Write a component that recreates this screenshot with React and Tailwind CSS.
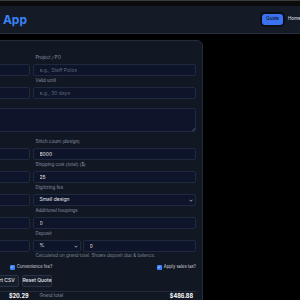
import React from "react";

const labelCls = "block pl-[3px] text-[4.5px] leading-[6px] text-[#8b95a7]";
const boxCls =
  "h-[12px] w-full rounded-[2px] border border-[#1f2a40] bg-[#0e152a] pl-[6px] py-0 text-[5px] text-[#e5e7eb] placeholder:text-[#5c677c] outline-none";

function Field({ label, children, tight }) {
  return (
    <div className={tight ? "flex flex-col gap-[1px]" : "flex flex-col gap-[3px]"}>
      <span className={labelCls}>{label}</span>
      {children}
    </div>
  );
}

function TextInput({ value, placeholder }) {
  return <input readOnly className={boxCls} defaultValue={value} placeholder={placeholder} />;
}

function Chevron() {
  return (
    <svg width="4" height="3" viewBox="0 0 8 5" className="shrink-0">
      <path d="M1 1l3 3 3-3" fill="none" stroke="#cbd5e1" strokeWidth="1.4" />
    </svg>
  );
}

function SelectBox({ value, className = "" }) {
  return (
    <div
      className={
        "flex h-[12px] items-center justify-between rounded-[2px] border border-[#1f2a40] bg-[#0e152a] pl-[6px] pr-[2px] text-[5px] text-[#e5e7eb] " +
        className
      }
    >
      <span>{value}</span>
      <Chevron />
    </div>
  );
}

function Check({ label }) {
  return (
    <label className="flex items-center gap-[2px] text-[4.2px] leading-[6px] text-[#d1d5db]">
      <span className="flex h-[5px] w-[5px] items-center justify-center rounded-[1px] bg-[#3b82f6]">
        <svg width="4" height="4" viewBox="0 0 10 10">
          <path d="M2 5.2l2 2L8 3" fill="none" stroke="#fff" strokeWidth="1.6" />
        </svg>
      </span>
      {label}
    </label>
  );
}

function Btn({ children, w }) {
  return (
    <button
      className={
        "flex h-[12px] shrink-0 items-center justify-center whitespace-nowrap rounded-[2px] border border-[#2a3446] bg-[#161d2b] text-[5px] font-medium text-[#e5e7eb] " +
        w
      }
    >
      {children}
    </button>
  );
}

export default function App() {
  return (
    <div className="min-h-screen w-[300px] overflow-hidden bg-black font-['Inter',sans-serif]">
      <div className="h-[6px] border-t border-[#3b3b3b] bg-[#0b0b0b]" />

      <header className="h-[28px] border-b border-[#273142] bg-[#141a26]">
        <div className="-ml-[134px] flex h-full w-[500px] items-center">
          <div className="w-[161px] shrink-0 whitespace-nowrap text-right text-[12px] font-bold leading-none text-[#3b82f6]">
            Embroidery Pricing App
          </div>
          <nav className="ml-[235px] flex items-center gap-[5px] text-[4.5px]">
            <a className="flex h-[11px] w-[21px] items-center justify-center rounded-[3px] bg-[#3b72f0] font-medium text-[#0b1020] ring-2 ring-[#0a0e16]">
              Quote
            </a>
            <a className="font-medium text-[#d1d5db]">Home</a>
            <a className="font-medium text-[#d1d5db]">History</a>
          </nav>
        </div>
      </header>

      <main className="pt-[6px]">
        <section className="-ml-[141px] w-[344px] rounded-[6px] border border-[#232c3b] bg-[#111723] px-[6px] pt-[14px] pb-[10px]">
          <div className="grid grid-cols-2 gap-x-[3px] gap-y-[2px]">
            <Field label="Customer name">
              <TextInput placeholder="e.g., Acme Co." />
            </Field>
            <Field label="Project / PO">
              <TextInput placeholder="e.g., Staff Polos" />
            </Field>
            <Field label="Contact email">
              <TextInput placeholder="name@company.com" />
            </Field>
            <Field label="Valid until">
              <TextInput placeholder="e.g., 30 days" />
            </Field>
          </div>

          <div className="mt-[2px]">
            <Field label="Notes" tight>
              <div className="relative">
                <textarea
                  readOnly
                  className="block h-[24px] w-full resize-none rounded-[2px] border border-[#1f2a40] bg-[#0e152a] px-[6px] py-[3px] text-[5px] text-[#e5e7eb] outline-none"
                />
                <svg width="3" height="3" viewBox="0 0 6 6" className="absolute right-[1px] bottom-[1px]">
                  <path d="M5.5 0.5L0.5 5.5M5.5 3L3 5.5" stroke="#94a3b8" strokeWidth="0.8" />
                </svg>
              </div>
            </Field>
          </div>

          <div className="mt-[7px] grid grid-cols-2 gap-x-[3px] gap-y-[2px]">
            <Field label="Quantity">
              <TextInput value="24" />
            </Field>
            <Field label="Stitch count (design)">
              <TextInput value="8000" />
            </Field>
            <Field label="Garment cost (each) ($)">
              <TextInput value="12" />
            </Field>
            <Field label="Shipping cost (total) ($)">
              <TextInput value="25" />
            </Field>
            <Field label="Placements">
              <TextInput value="1" />
            </Field>
            <Field label="Digitizing fee">
              <SelectBox value="Small design" />
            </Field>
            <Field label="Setup fee ($)">
              <TextInput value="0" />
            </Field>
            <Field label="Additional hoopings">
              <TextInput value="0" />
            </Field>
            <Field label="Discount (%)">
              <TextInput value="0" />
            </Field>
            <div>
              <Field label="Deposit">
                <div className="flex gap-[2px]">
                  <SelectBox value="%" className="w-[48px] shrink-0" />
                  <input readOnly className={boxCls + " flex-1"} defaultValue="0" />
                </div>
              </Field>
              <p className="mt-[1px] pl-[3px] text-[4.5px] leading-[6px] text-[#7c879a]">
                Calculated on grand total. Shows deposit due &amp; balance.
              </p>
            </div>
          </div>

          <div className="mt-[5px] grid grid-cols-3">
            <div className="flex justify-start">
              <Check label="Rush order?" />
            </div>
            <div className="flex justify-center">
              <Check label="Convenience fee?" />
            </div>
            <div className="flex justify-end">
              <Check label="Apply sales tax?" />
            </div>
          </div>

          <div className="mt-[5px] flex gap-[3px]">
            <Btn w="w-[36px]">Save Quote</Btn>
            <Btn w="w-[34px]">Print / PDF</Btn>
            <Btn w="w-[38px]">Copy Summary</Btn>
            <Btn w="w-[36px]">Export CSV</Btn>
            <Btn w="w-[30px]">Reset Quote</Btn>
          </div>

          <div className="mt-[4px] grid grid-cols-2 gap-x-[3px] border-t border-[#232c3b] pt-[1px]">
            <div className="flex items-center justify-between pl-[7px] pr-[1px]">
              <span className="text-[4.5px] text-[#8b95a7]">Sales tax</span>
              <span className="text-[5.5px] leading-[7px] font-bold text-white">$20.29</span>
            </div>
            <div className="flex items-center justify-between pl-[7px] pr-[3px]">
              <span className="text-[4.5px] text-[#8b95a7]">Grand total</span>
              <span className="text-[5.5px] leading-[7px] font-bold text-white">$486.88</span>
            </div>
          </div>
        </section>
      </main>
    </div>
  );
}
